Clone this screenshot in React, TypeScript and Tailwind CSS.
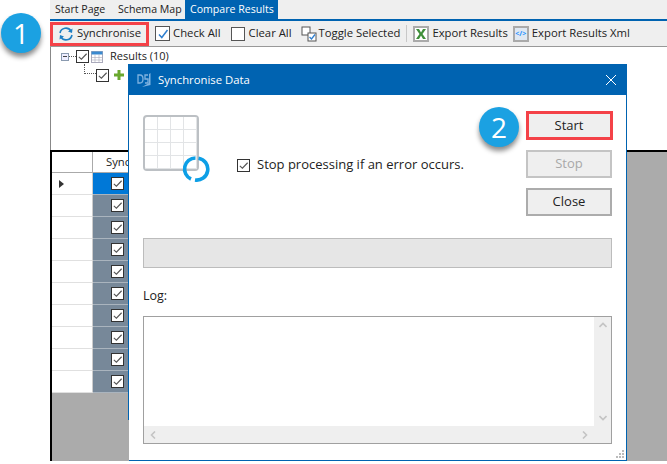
const F = "font-['Open_Sans',_'Noto_Sans',sans-serif]";

function Check({ size = 13, className = "" }: { size?: number; className?: string }) {
  return (
    <span
      className={"inline-flex items-center justify-center bg-white border border-[#333] shrink-0 " + className}
      style={{ width: size, height: size }}
    >
      <svg viewBox="0 0 12 12" width={size - 2} height={size - 2}>
        <path d="M2 6.5 L4.8 9 L10.5 3" fill="none" stroke="#555" strokeWidth="1.2" />
      </svg>
    </span>
  );
}

function Badge({ n }: { n: string }) {
  return (
    <div className="w-10 h-10 rounded-full bg-[#1ba1e2] text-white flex items-center justify-center text-[28px] shadow-[0_4px_5px_rgba(0,0,0,0.45)] font-['Open_Sans',sans-serif]">
      {n}
    </div>
  );
}

function Btn({ label, cls }: { label: string; cls: string }) {
  return (
    <div className={"w-[86px] h-[28px] bg-[#efefef] border-2 flex items-center justify-center text-[13px] " + cls}>
      {label}
    </div>
  );
}

export default function App() {
  const rows = Array.from({ length: 10 }, (_, i) => i);
  return (
    <div className={"relative w-[667px] h-[464px] bg-white overflow-hidden text-[12px] text-[#222] " + F}>
      <div className="ml-[50px] w-[617px] h-[461px] flex flex-col">
        {/* tabs */}
        <div className="h-[19px] bg-[#efefef] flex shrink-0 pl-[5px] text-[10.6px] whitespace-nowrap">
          <span className="w-[63px] pt-[2px]">Start Page</span>
          <span className="w-[67px] pt-[2px]">Schema Map</span>
          <span className="w-[93px] h-full bg-[#0063b1] text-white pl-[5px] pt-[2px]">Compare Results</span>
        </div>
        {/* toolbar */}
        <div className="h-[28px] shrink-0 bg-[#efefef] border-t-2 border-t-[#0063b1] border-b border-b-[#999] flex items-center text-[11.3px] pl-[8px] whitespace-nowrap">
          <div className="flex items-center gap-[3px]">
            <svg viewBox="0 0 16 16" width="16" height="16">
              <path d="M2 7 A6 6 0 0 1 13 5" fill="none" stroke="#1f7fc4" strokeWidth="1.6" />
              <path d="M14.5 2.5 L14 7 L10 5.5 Z" fill="#1f7fc4" />
              <path d="M14 9 A6 6 0 0 1 3 11" fill="none" stroke="#1f7fc4" strokeWidth="1.6" />
              <path d="M1.5 13.5 L2 9 L6 10.5 Z" fill="#1f7fc4" />
            </svg>
            <span>Synchronise</span>
          </div>
          <div className="flex items-center gap-[3px] ml-[14px]">
            <span className="w-[15px] h-[15px] border border-[#555] bg-white flex items-center justify-center">
              <svg viewBox="0 0 12 12" width="12" height="12"><path d="M2 6.5 L4.8 9.5 L10.5 2" fill="none" stroke="#2f7fd0" strokeWidth="1.5" /></svg>
            </span>
            <span>Check All</span>
          </div>
          <div className="flex items-center gap-[4px] ml-[10px]">
            <span className="w-[14px] h-[14px] border border-[#555] bg-white" />
            <span>Clear All</span>
          </div>
          <div className="flex items-center gap-[2px] ml-[9px]">
            <svg viewBox="0 0 16 16" width="16" height="16">
              <rect x="1" y="1" width="8" height="8" fill="#fff" stroke="#555" />
              <rect x="7" y="7" width="8" height="8" fill="#fff" stroke="#555" />
              <path d="M8.5 11 L10.5 13 L14 8.5" fill="none" stroke="#2f7fd0" strokeWidth="1.3" />
            </svg>
            <span>Toggle Selected</span>
          </div>
          <div className="w-px h-[17px] bg-[#c8c8c8] mx-[6px]" />
          <div className="flex items-center gap-[3px]">
            <span className="w-[16px] h-[16px] border-2 border-[#aaa] bg-white flex items-center justify-center">
              <svg viewBox="0 0 12 12" width="12" height="12"><path d="M1 1 H4 L6 4.5 L8 1 H11 L7.5 6 L11 11 H8 L6 7.5 L4 11 H1 L4.5 6 Z" fill="#3f8f3a" /></svg>
            </span>
            <span>Export Results</span>
          </div>
          <div className="flex items-center gap-[3px] ml-[5px]">
            <span className="w-[16px] h-[16px] border-2 border-[#aaa] bg-[#dfe8f2] flex items-center justify-center text-[7px] font-bold text-[#1e90ff] leading-none">&lt;/&gt;</span>
            <span>Export Results Xml</span>
          </div>
        </div>
        {/* tree */}
        <div className="h-[103px] shrink-0 bg-white border-l border-l-[#888] relative text-[11px]">
          <div className="flex items-center h-[17px] mt-[1px] pl-[10px]">
            <span className="w-[8px] h-[8px] border border-[#8a9ab0] bg-[#eef] flex items-center justify-center">
              <span className="w-[4px] h-px bg-[#444]" />
            </span>
            <span className="w-[7px] border-t border-dotted border-[#555]" />
            <Check size={13} />
            <svg viewBox="0 0 12 12" width="12" height="12" className="ml-[2px] mr-[7px]">
              <rect x="0.5" y="0.5" width="11" height="11" fill="#fff" stroke="#aab" />
              <rect x="0.5" y="0.5" width="11" height="3" fill="#3a8ad0" />
              <path d="M0.5 6.5 H11.5 M0.5 9 H11.5 M4 3.5 V11.5 M8 3.5 V11.5" stroke="#aab" strokeWidth="0.6" />
            </svg>
            <span>Results (10)</span>
          </div>
          <div className="flex items-center h-[20px] pl-[33px]">
            <span className="w-[12px] h-[10px] -mt-[12px] border-l border-b border-dotted border-[#555]" />
            <Check size={13} />
            <svg viewBox="0 0 10 10" width="10" height="10" className="ml-[5px]"><path d="M3.5 0 H6.5 V3.5 H10 V6.5 H6.5 V10 H3.5 V6.5 H0 V3.5 H3.5 Z" fill="#6aa82e" /></svg>
          </div>
        </div>
        {/* grid */}
        <div className="flex-1 bg-[#ababab] border-t-2 border-t-black border-l-2 border-l-black">
          <div className="flex w-[121px] h-[21px] bg-white border-b border-b-[#aaa]">
            <div className="w-[41px] border-r border-r-[#aaa]" />
            <div className="pl-[13px] text-[11.3px] flex items-center whitespace-nowrap">Synchronise</div>
          </div>
          {rows.map((i) => (
            <div key={i} className="flex h-[22px]">
              <div className="w-[41px] bg-white border-b border-b-[#e0e0e0] border-r border-r-[#ccc] flex items-center pl-[7px]">
                {i === 0 && <span className="w-0 h-0 border-y-[4.5px] border-y-transparent border-l-[5px] border-l-[#333]" />}
              </div>
              <div className={"w-[80px] flex items-center pl-[18px] border-b border-b-[#aab4be] " + (i === 0 ? "bg-[#0078d7]" : "bg-[#778899]")}>
                <Check size={13} />
              </div>
            </div>
          ))}
        </div>
      </div>

      {/* badges */}
      <div className="absolute left-[1px] top-[13px]"><Badge n="1" /></div>
      <div className="absolute left-[50px] top-[22px] w-[99px] h-[24px] border-[3px] border-[#f44248]" />

      {/* dialog */}
      <div className="absolute left-[128px] top-[64px] w-[499px] h-[397px] bg-white border border-[#0063b1] flex flex-col">
        <div className="h-[30px] shrink-0 bg-[#0063b1] text-white flex items-center pl-[8px] pr-[9px] text-[11.3px]">
          <svg viewBox="0 0 16 16" width="16" height="16" className="mr-[5px]">
            <path d="M1 3 H3 Q6 3 6 7 Q6 11 3 11 H1 Z M11 3 H8 V7 H11 V11 H8" fill="none" stroke="#7fb3e0" strokeWidth="1.3" />
            <path d="M13.5 1 V13 L5 15 L12 11 V2 Z" fill="#7fb3e0" />
          </svg>
          <span className="flex-1">Synchronise Data</span>
          <svg viewBox="0 0 12 12" width="12" height="12"><path d="M1 1 L11 11 M11 1 L1 11" stroke="#fff" strokeWidth="1" /></svg>
        </div>
        <div className="flex-1 relative px-[14px] pt-[20px] flex flex-col">
          <div className="flex h-[123px] shrink-0">
            <div className="relative w-[56px] h-[56px] mr-[38px] border-2 border-[#bcc0c4] rounded-[4px] grid grid-cols-4 grid-rows-4">
              {Array.from({ length: 16 }, (_, i) => (
                <div key={i} className="border-r border-b border-[#e2e4e6]" />
              ))}
              <svg viewBox="0 0 28 28" width="28" height="28" className="absolute left-[37px] top-[38px]">
                <path d="M13.5 3 A11 11 0 0 0 9 24" fill="none" stroke="#0d9fe6" strokeWidth="3.6" />
                <path d="M16.5 3.2 A11 11 0 0 1 13 25" fill="none" stroke="#0d9fe6" strokeWidth="3.6" />
              </svg>
            </div>
            <div className="flex items-center gap-[7px] h-[18px] mt-[41px] text-[13px]">
              <Check size={13} />
              <span>Stop processing if an error occurs.</span>
            </div>
          </div>
          <div className="h-[30px] shrink-0 bg-[#e6e6e6] border border-[#bcbcbc]" />
          <div className="mt-[19px] h-[18px] text-[12.5px] flex items-center">Log:</div>
          <div className="mt-[11px] h-[128px] shrink-0 border border-[#a0a0a0] flex flex-col">
            <div className="flex-1 flex">
              <div className="flex-1" />
              <div className="w-[17px] bg-[#efefef] flex flex-col items-center justify-between py-[5px]">
                <svg viewBox="0 0 8 6" width="8" height="6"><path d="M0.5 5 L4 1.5 L7.5 5" fill="none" stroke="#c4c4c4" strokeWidth="1.6" /></svg>
                <svg viewBox="0 0 8 6" width="8" height="6"><path d="M0.5 1 L4 4.5 L7.5 1" fill="none" stroke="#c4c4c4" strokeWidth="1.6" /></svg>
              </div>
            </div>
            <div className="h-[17px] shrink-0 bg-[#efefef] flex items-center justify-between pl-[6px] pr-[23px]">
              <svg viewBox="0 0 6 8" width="6" height="8"><path d="M5 0.5 L1.5 4 L5 7.5" fill="none" stroke="#c4c4c4" strokeWidth="1.6" /></svg>
              <svg viewBox="0 0 6 8" width="6" height="8"><path d="M1 0.5 L4.5 4 L1 7.5" fill="none" stroke="#c4c4c4" strokeWidth="1.6" /></svg>
            </div>
          </div>
          <div className="absolute right-[2px] bottom-[2px] grid grid-cols-3 gap-px">
            <span /><span /><span className="w-[2px] h-[2px] bg-[#bbb]" />
            <span /><span className="w-[2px] h-[2px] bg-[#bbb]" /><span className="w-[2px] h-[2px] bg-[#bbb]" />
            <span className="w-[2px] h-[2px] bg-[#bbb]" /><span className="w-[2px] h-[2px] bg-[#bbb]" /><span className="w-[2px] h-[2px] bg-[#bbb]" />
          </div>
          <div className="absolute left-[397px] top-[17px] flex flex-col gap-[10px]">
            <Btn label="Start" cls="border-[#acacac]" />
            <Btn label="Stop" cls="border-[#c4c4c4] text-[#a8a8a8]" />
            <Btn label="Close" cls="border-[#acacac]" />
          </div>
          <div className="absolute left-[397px] top-[16px] w-[87px] h-[29px] border-[3px] border-[#f44248]" />
          <div className="absolute left-[350px] top-[12px]"><Badge n="2" /></div>
        </div>
        <span className="absolute -left-[1px] top-[355px] w-px h-[41px] bg-[#ababab]" />
      </div>
    </div>
  );
}
